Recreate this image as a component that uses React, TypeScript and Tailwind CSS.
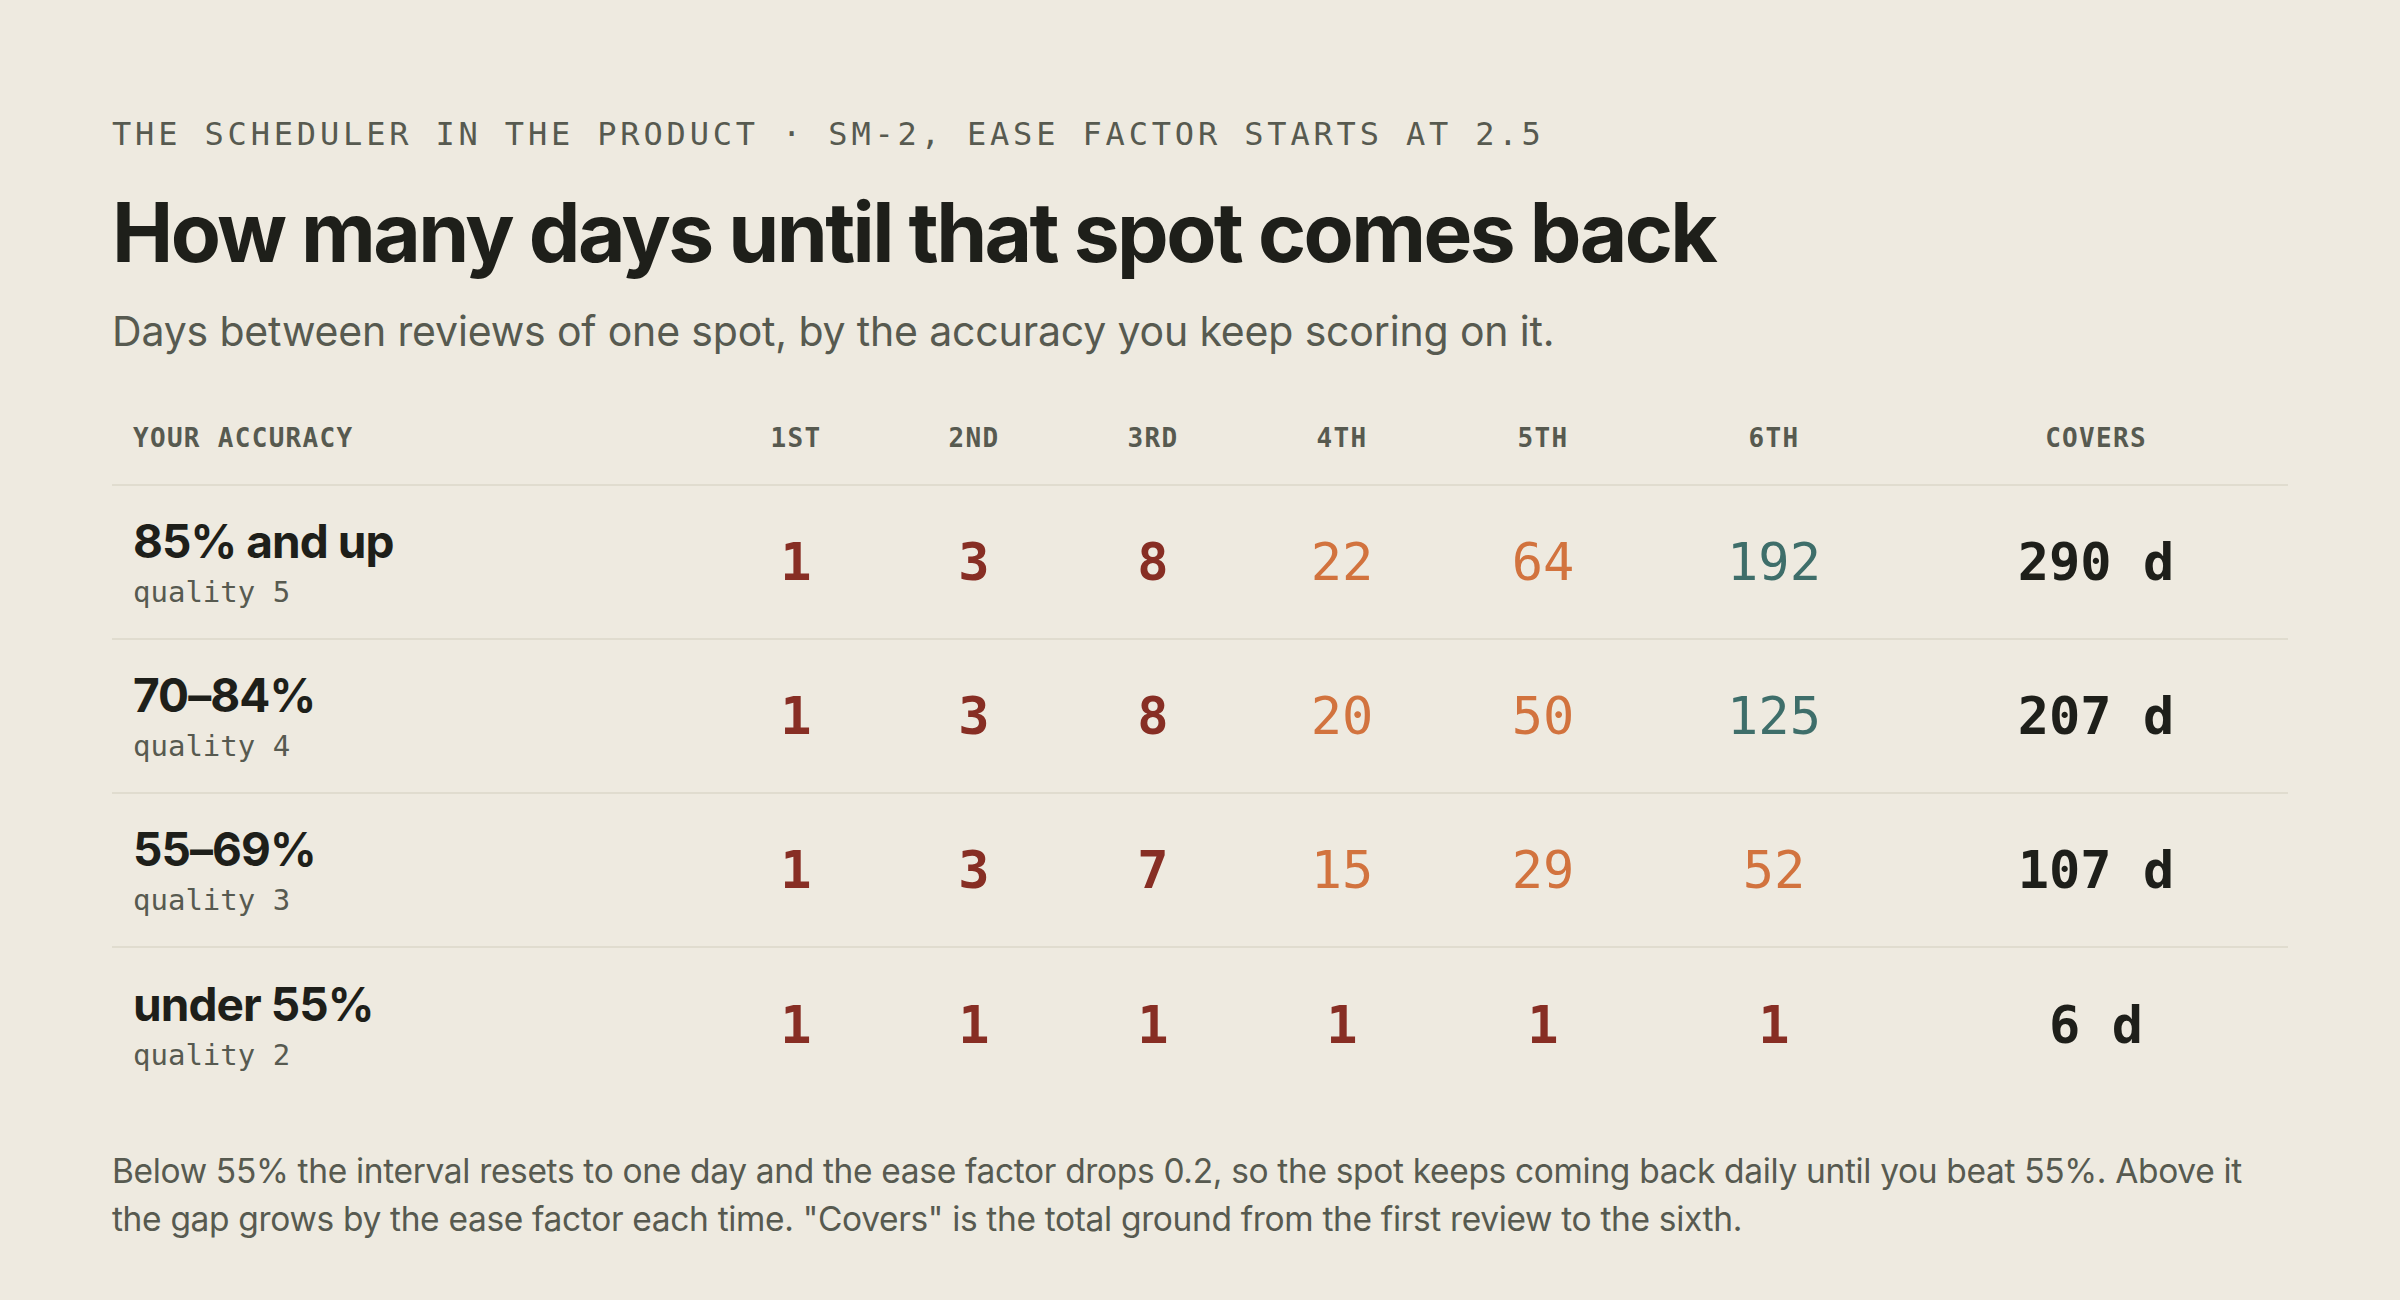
const sans = "font-['Inter','Noto_Sans',sans-serif]";
const mono = "font-['DejaVu_Sans_Mono','Liberation_Mono',monospace]";

const cols =
  "grid grid-cols-[596px_176px_180px_178px_200px_202px_260px_384px] items-center";

const heads = ["1st", "2nd", "3rd", "4th", "5th", "6th"];

const rows = [
  { label: "85% and up", q: 5, vals: [1, 3, 8, 22, 64, 192], covers: "290 d" },
  { label: "70–84%", q: 4, vals: [1, 3, 8, 20, 50, 125], covers: "207 d" },
  { label: "55–69%", q: 3, vals: [1, 3, 7, 15, 29, 52], covers: "107 d" },
  { label: "under 55%", q: 2, vals: [1, 1, 1, 1, 1, 1], covers: "6 d" },
];

// short gaps read red, mid ones orange, long ones teal
function tone(v: number) {
  if (v < 10) return "text-[#872e24] font-bold";
  if (v < 100) return "text-[#d2733e] font-normal";
  return "text-[#3e6e6a] font-medium";
}

export default function App() {
  return (
    <div className={`min-h-screen bg-[#eeeae0] px-[112px] pt-[118px] pb-20 text-[#1e1f1a] ${sans}`}>
      <p className={`${mono} text-[32px] leading-none tracking-[0.12em] text-[#575a50] uppercase`}>
        The scheduler in the product · SM-2, ease factor starts at 2.5
      </p>
      <h1 className="mt-[42px] text-[82px] font-bold leading-none tracking-[-0.032em] text-[#1e1f1a]">
        How many days until that spot comes back
      </h1>
      <p className="mt-[37px] text-[41px] leading-none tracking-[-0.004em] text-[#575a50]">
        Days between reviews of one spot, by the accuracy you keep scoring on it.
      </p>

      <div className="mt-[73px]">
        <div className={`${cols} ${mono} border-b-2 border-[#e0dccf] pb-[33px] text-[26px] font-semibold leading-none tracking-[0.05em] text-[#575a50] uppercase`}>
          <div className="pl-[21px]">Your accuracy</div>
          {heads.map((h) => (
            <div key={h} className="text-center">{h}</div>
          ))}
          <div className="text-center">Covers</div>
        </div>

        {rows.map((r, i) => (
          <div
            key={r.label}
            className={`${cols} h-[154px] ${i < rows.length - 1 ? "border-b-2 border-[#e0dccf]" : ""}`}
          >
            <div className="pl-[21px]">
              <div className="text-[46px] font-bold leading-none tracking-[-0.02em]">{r.label}</div>
              <div className={`${mono} mt-[14px] text-[29px] leading-none text-[#575a50]`}>
                quality {r.q}
              </div>
            </div>
            {r.vals.map((v, j) => (
              <div key={j} className={`${mono} text-center text-[52px] leading-none ${tone(v)}`}>
                {v}
              </div>
            ))}
            <div className={`${mono} text-center text-[52px] font-bold leading-none text-[#1e1f1a]`}>
              {r.covers}
            </div>
          </div>
        ))}
      </div>

      <p className="mt-[45px] max-w-[2170px] text-[33.5px] leading-[48px] tracking-[-0.01em] text-[#575a50]">
        Below 55% the interval resets to one day and the ease factor drops 0.2, so the spot keeps
        coming back daily until you beat 55%. Above it the gap grows by the ease factor each time.
        "Covers" is the total ground from the first review to the sixth.
      </p>
    </div>
  );
}
